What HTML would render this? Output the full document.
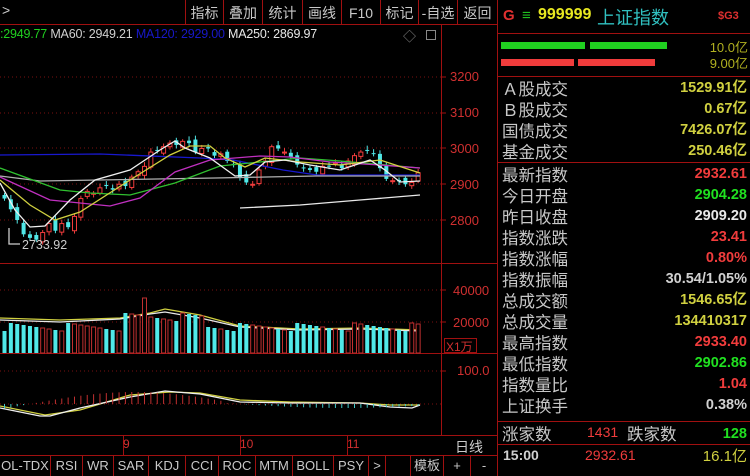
<!DOCTYPE html>
<html><head><meta charset="utf-8"><style>
*{margin:0;padding:0;box-sizing:border-box}
body{width:750px;height:476px;background:#000;overflow:hidden;position:relative;font-family:"Liberation Sans","Noto Sans CJK SC",sans-serif;color:#c0c0c0}
.a{position:absolute;white-space:nowrap}
.tb{position:absolute;top:0;height:24px;border-left:1px solid #a01010;color:#c8c8c8;font-size:14px;line-height:26px;text-align:center}
.bt{position:absolute;top:456px;height:20px;border-left:1px solid #a01010;color:#c8c8c8;font-size:13px;line-height:20px;text-align:center}
.lbl{position:absolute;left:502px;font-size:16.5px;color:#c8c8c8;line-height:20px;font-family:"Noto Sans CJK SC",sans-serif}
.val{position:absolute;right:3px;font-size:14.5px;font-weight:bold;line-height:20px;font-family:"Liberation Sans","Noto Sans CJK SC",sans-serif}
.y{color:#d0d040}.r{color:#f03c3c}.g{color:#20e020}.w{color:#e8e8e8}.lg{color:#d0d0d0}
</style></head><body>
<svg class="a" style="left:0;top:0" width="750" height="476">
<g stroke="#a01010" stroke-width="1" fill="none">
<line x1="0" y1="24.5" x2="497" y2="24.5"/>
<line x1="441.5" y1="25" x2="441.5" y2="435"/>
<line x1="0" y1="263.5" x2="497" y2="263.5"/>
<line x1="0" y1="353.5" x2="497" y2="353.5"/>
<line x1="0" y1="435.5" x2="497" y2="435.5"/>
<line x1="0" y1="455.5" x2="497" y2="455.5"/>
<line x1="497.5" y1="0" x2="497.5" y2="476"/>
<line x1="497" y1="33.5" x2="750" y2="33.5"/>
<line x1="497" y1="76.5" x2="750" y2="76.5"/>
<line x1="497" y1="162.5" x2="750" y2="162.5"/>
<line x1="497" y1="421.5" x2="750" y2="421.5"/>
<line x1="497" y1="444.5" x2="750" y2="444.5"/>
<line x1="123.5" y1="436" x2="123.5" y2="455"/>
<line x1="240.5" y1="436" x2="240.5" y2="455"/>
<line x1="347.5" y1="436" x2="347.5" y2="455"/>
<rect x="444.5" y="338.5" width="32" height="14"/>
</g>
<g stroke="#7a1010" stroke-dasharray="1,3">
<line x1="0" y1="77" x2="441" y2="77"/><line x1="0" y1="113" x2="441" y2="113"/>
<line x1="0" y1="148" x2="441" y2="148"/><line x1="0" y1="184" x2="441" y2="184"/>
<line x1="0" y1="220" x2="441" y2="220"/><line x1="0" y1="290" x2="441" y2="290"/>
<line x1="0" y1="322" x2="441" y2="322"/><line x1="0" y1="371" x2="441" y2="371"/>
<line x1="0" y1="404" x2="441" y2="404"/>
</g>
<g stroke="#a01010"><line x1="441" y1="77" x2="446" y2="77"/><line x1="441" y1="113" x2="446" y2="113"/><line x1="441" y1="148" x2="446" y2="148"/><line x1="441" y1="184" x2="446" y2="184"/><line x1="441" y1="220" x2="446" y2="220"/><line x1="441" y1="290" x2="446" y2="290"/><line x1="441" y1="322" x2="446" y2="322"/><line x1="441" y1="371" x2="446" y2="371"/></g>
<g id="cd"></g>
<g fill="none" stroke-width="1.3">
<polyline stroke="#1818d0" points="0,155 100,154 200,158 233,160 283,170 317,175 420,175"/>
<polyline stroke="#b0b0b0" points="0,176 40,181 215,178 315,176 420,176"/>
<polyline stroke="#e8e8e8" points="240,208 300,205 360,200 420,195"/>
<polyline stroke="#30c030" points="0,168 60,190 90,193 130,195 175,183 220,166 260,162 300,158 340,161 420,168"/>
<polyline stroke="#c030c0" points="0,177 50,200 110,206 140,198 175,172 210,160 260,156 290,157 330,162 380,165 420,168"/>
<polyline stroke="#d0d040" points="0,180 30,205 55,220 80,212 130,180 170,155 190,146 210,146 225,158 245,167 265,158 300,162 340,165 380,160 420,173"/>
<polyline stroke="#f0f0f0" points="0,183 15,210 30,227 45,226 70,200 95,180 130,170 160,150 175,141 185,148 210,158 235,176 250,175 265,162 285,160 310,165 340,170 370,160 385,170 400,182 420,181"/>
<polyline stroke="#d0d040" points="0,318 60,320 120,318 150,313 165,309 200,315 240,326 300,329 360,328 420,330"/>
<polyline stroke="#e8e8e8" points="0,320 60,322 120,319 150,314 165,312 200,318 240,327 300,330 360,329 420,331"/>
<polyline stroke="#d0d040" points="0,406 45,415 80,410 130,395 170,392 200,393 240,400 290,402 360,403 390,405 420,405"/>
<polyline stroke="#f0f0f0" points="0,408 40,416 50,416 80,408 130,397 165,391 200,394 240,402 290,403 360,403 390,407 412,408 420,405"/>
<polyline stroke="#ccc" points="9,228 9,244 20,244"/>
</g>
<g id="vb"></g>
</svg>
<div class="a" style="left:2px;top:2px;font-size:14px;color:#ccc">&gt;</div>
<div class="tb" style="left:185px;width:38px">指标</div>
<div class="tb" style="left:223px;width:39px">叠加</div>
<div class="tb" style="left:262px;width:40px">统计</div>
<div class="tb" style="left:302px;width:39px">画线</div>
<div class="tb" style="left:341px;width:39px">F10</div>
<div class="tb" style="left:380px;width:38px">标记</div>
<div class="tb" style="left:418px;width:39px">-自选</div>
<div class="tb" style="left:457px;width:40px">返回</div>
<div class="a" style="left:0;top:27px;font-size:12.5px;letter-spacing:-0.2px"><span style="color:#20d020">:2949.77</span> <span class="lg">MA60: 2949.21</span> <span style="color:#1818c8">MA120: 2929.00</span> <span class="w">MA250: 2869.97</span></div>
<div class="a" style="left:403px;top:26px;font-size:13px;color:#888">◇</div>
<div class="a" style="left:426px;top:30px;width:10px;height:10px;border:1px solid #888"></div>
<div class="a" style="left:450px;top:69px;font-size:13px;color:#d03030">3200</div>
<div class="a" style="left:450px;top:105px;font-size:13px;color:#d03030">3100</div>
<div class="a" style="left:450px;top:141px;font-size:13px;color:#d03030">3000</div>
<div class="a" style="left:450px;top:177px;font-size:13px;color:#d03030">2900</div>
<div class="a" style="left:450px;top:213px;font-size:13px;color:#d03030">2800</div>
<div class="a" style="left:22px;top:238px;font-size:12.5px;color:#ccc">2733.92</div>
<div class="a" style="left:453px;top:283px;font-size:13px;color:#d03030">40000</div>
<div class="a" style="left:453px;top:315px;font-size:13px;color:#d03030">20000</div>
<div class="a" style="left:446px;top:338px;font-size:12px;color:#d03030">X1万</div>
<div class="a" style="left:457px;top:363px;font-size:13px;color:#d03030">100.0</div>
<div class="a" style="left:123px;top:437px;font-size:12px;color:#d03030">9</div>
<div class="a" style="left:240px;top:437px;font-size:12px;color:#d03030">10</div>
<div class="a" style="left:347px;top:437px;font-size:12px;color:#d03030">11</div>
<div class="a" style="left:455px;top:437px;font-size:14px;color:#ccc">日线</div>
<div class="bt" style="left:-1px;width:51px">OL-TDX</div>
<div class="bt" style="left:50px;width:32px">RSI</div>
<div class="bt" style="left:82px;width:31px">WR</div>
<div class="bt" style="left:113px;width:35px">SAR</div>
<div class="bt" style="left:148px;width:37px">KDJ</div>
<div class="bt" style="left:185px;width:33px">CCI</div>
<div class="bt" style="left:218px;width:37px">ROC</div>
<div class="bt" style="left:255px;width:37px">MTM</div>
<div class="bt" style="left:292px;width:41px">BOLL</div>
<div class="bt" style="left:333px;width:35px">PSY</div>
<div class="bt" style="left:368px;width:17px">&gt;</div>
<div class="bt" style="left:385px;width:25px"></div>
<div class="bt" style="left:410px;width:33px">模板</div>
<div class="bt" style="left:443px;width:27px">+</div>
<div class="bt" style="left:470px;width:27px">-</div>

<div class="a" style="left:503px;top:7px;font-size:15px;font-weight:bold;color:#e03030">G</div>
<div class="a" style="left:522px;top:7px;font-size:15px;color:#20c020">≡</div>
<div class="a" style="left:538px;top:6px;font-size:16px;font-weight:bold;color:#e8e820">999999</div>
<div class="a" style="left:597px;top:4px;font-size:18px;color:#30c0c0;font-family:'Noto Sans CJK SC',sans-serif">上证指数</div>
<div class="a" style="left:718px;top:10px;font-size:11px;font-weight:bold;color:#e03030">$G3</div>
<div class="a" style="left:501px;top:42px;width:84px;height:7px;background:#20d020"></div>
<div class="a" style="left:590px;top:42px;width:77px;height:7px;background:#20d020"></div>
<div class="a" style="left:501px;top:59px;width:73px;height:7px;background:#f03c3c"></div>
<div class="a" style="left:578px;top:59px;width:77px;height:7px;background:#f03c3c"></div>
<div class="a y" style="right:2px;top:37px;font-size:13px;color:#b0b020">10.0亿</div>
<div class="a y" style="right:2px;top:53px;font-size:13px;color:#b0b020">9.00亿</div>

<div class="lbl" style="top:78px">Ａ股成交</div><div class="val y" style="top:78px">1529.91亿</div>
<div class="lbl" style="top:99px">Ｂ股成交</div><div class="val y" style="top:99px">0.67亿</div>
<div class="lbl" style="top:120px">国债成交</div><div class="val y" style="top:120px">7426.07亿</div>
<div class="lbl" style="top:141px">基金成交</div><div class="val y" style="top:141px">250.46亿</div>
<div class="lbl" style="top:164px">最新指数</div><div class="val r" style="top:164px">2932.61</div>
<div class="lbl" style="top:185px">今日开盘</div><div class="val g" style="top:185px">2904.28</div>
<div class="lbl" style="top:206px">昨日收盘</div><div class="val w" style="top:206px">2909.20</div>
<div class="lbl" style="top:227px">指数涨跌</div><div class="val r" style="top:227px">23.41</div>
<div class="lbl" style="top:248px">指数涨幅</div><div class="val r" style="top:248px">0.80%</div>
<div class="lbl" style="top:269px">指数振幅</div><div class="val lg" style="top:269px">30.54/1.05%</div>
<div class="lbl" style="top:290px">总成交额</div><div class="val y" style="top:290px">1546.65亿</div>
<div class="lbl" style="top:311px">总成交量</div><div class="val y" style="top:311px">134410317</div>
<div class="lbl" style="top:332px">最高指数</div><div class="val r" style="top:332px">2933.40</div>
<div class="lbl" style="top:353px">最低指数</div><div class="val g" style="top:353px">2902.86</div>
<div class="lbl" style="top:374px">指数量比</div><div class="val r" style="top:374px">1.04</div>
<div class="lbl" style="top:395px">上证换手</div><div class="val lg" style="top:395px">0.38%</div>
<div class="lbl" style="top:423px">涨家数</div>
<div class="a r" style="left:587px;top:424px;font-size:14px">1431</div>
<div class="lbl" style="left:627px;top:423px">跌家数</div>
<div class="val g" style="top:424px">128</div>
<div class="a lg" style="left:503px;top:447px;font-size:14px;font-weight:bold">15:00</div>
<div class="a r" style="left:585px;top:447px;font-size:14px">2932.61</div>
<div class="a y" style="right:3px;top:445px;font-size:15px">16.1亿</div>

<script>
var ns="http://www.w3.org/2000/svg";
var c=[2860,2830,2800,2760,2750,2745,2765,2790,2770,2790,2780,2810,2860,2880,2875,2890,2895,2885,2900,2895,2920,2935,2950,2990,2995,3005,3015,3010,3020,3015,2990,3000,3000,2980,2985,2965,2955,2920,2905,2900,2940,2965,3005,3000,2990,2975,2955,2945,2940,2935,2950,2950,2960,2945,2965,2980,2990,2995,2985,2945,2915,2910,2908,2900,2905,2932];
var Y=function(p){return 77+(3200-p)*0.3575};
var cd=document.getElementById('cd'),vb=document.getElementById('vb');
var n=c.length,st=420/n;
for(var i=0;i<n;i++){
 var x=2+i*st,cl=c[i],op=i?c[i-1]+((i*37)%11-5)*2:2870;
 var up=cl>=op,col=up?'#f03c3c':'#50e8e8';
 var hi=Math.max(op,cl)+6+(i*13%7),lo=Math.min(op,cl)-6-(i*7%5);
 var l=document.createElementNS(ns,'line');l.setAttribute('x1',x+2.5);l.setAttribute('x2',x+2.5);l.setAttribute('y1',Y(hi));l.setAttribute('y2',Y(lo));l.setAttribute('stroke',col);cd.appendChild(l);
 var r=document.createElementNS(ns,'rect');var t=Y(Math.max(op,cl)),h=Math.max(1,Y(Math.min(op,cl))-t);
 r.setAttribute('x',x+0.5);r.setAttribute('y',t);r.setAttribute('width',4);r.setAttribute('height',h);
 if(up){r.setAttribute('fill','#000');r.setAttribute('stroke',col);}else r.setAttribute('fill',col);cd.appendChild(r);
 var vh=22+((i*17)%9)+(i>18&&i<32?10:0)+(i==22?18:0);
 var v=document.createElementNS(ns,'rect');v.setAttribute('x',x+0.5);v.setAttribute('y',353-vh);v.setAttribute('width',4);v.setAttribute('height',vh);
 if(up){v.setAttribute('fill','#000');v.setAttribute('stroke','#c03030');}else v.setAttribute('fill','#50e8e8');vb.appendChild(v);
 var m=Math.sin((i-4)/n*6.3)*(i<35?12:4);
 var b=document.createElementNS(ns,'line');b.setAttribute('x1',x+2.5);b.setAttribute('x2',x+2.5);b.setAttribute('y1',404);b.setAttribute('y2',404-m);b.setAttribute('stroke',m>0?'#c03030':'#40c8c8');vb.appendChild(b);
}
</script>
</body></html>
